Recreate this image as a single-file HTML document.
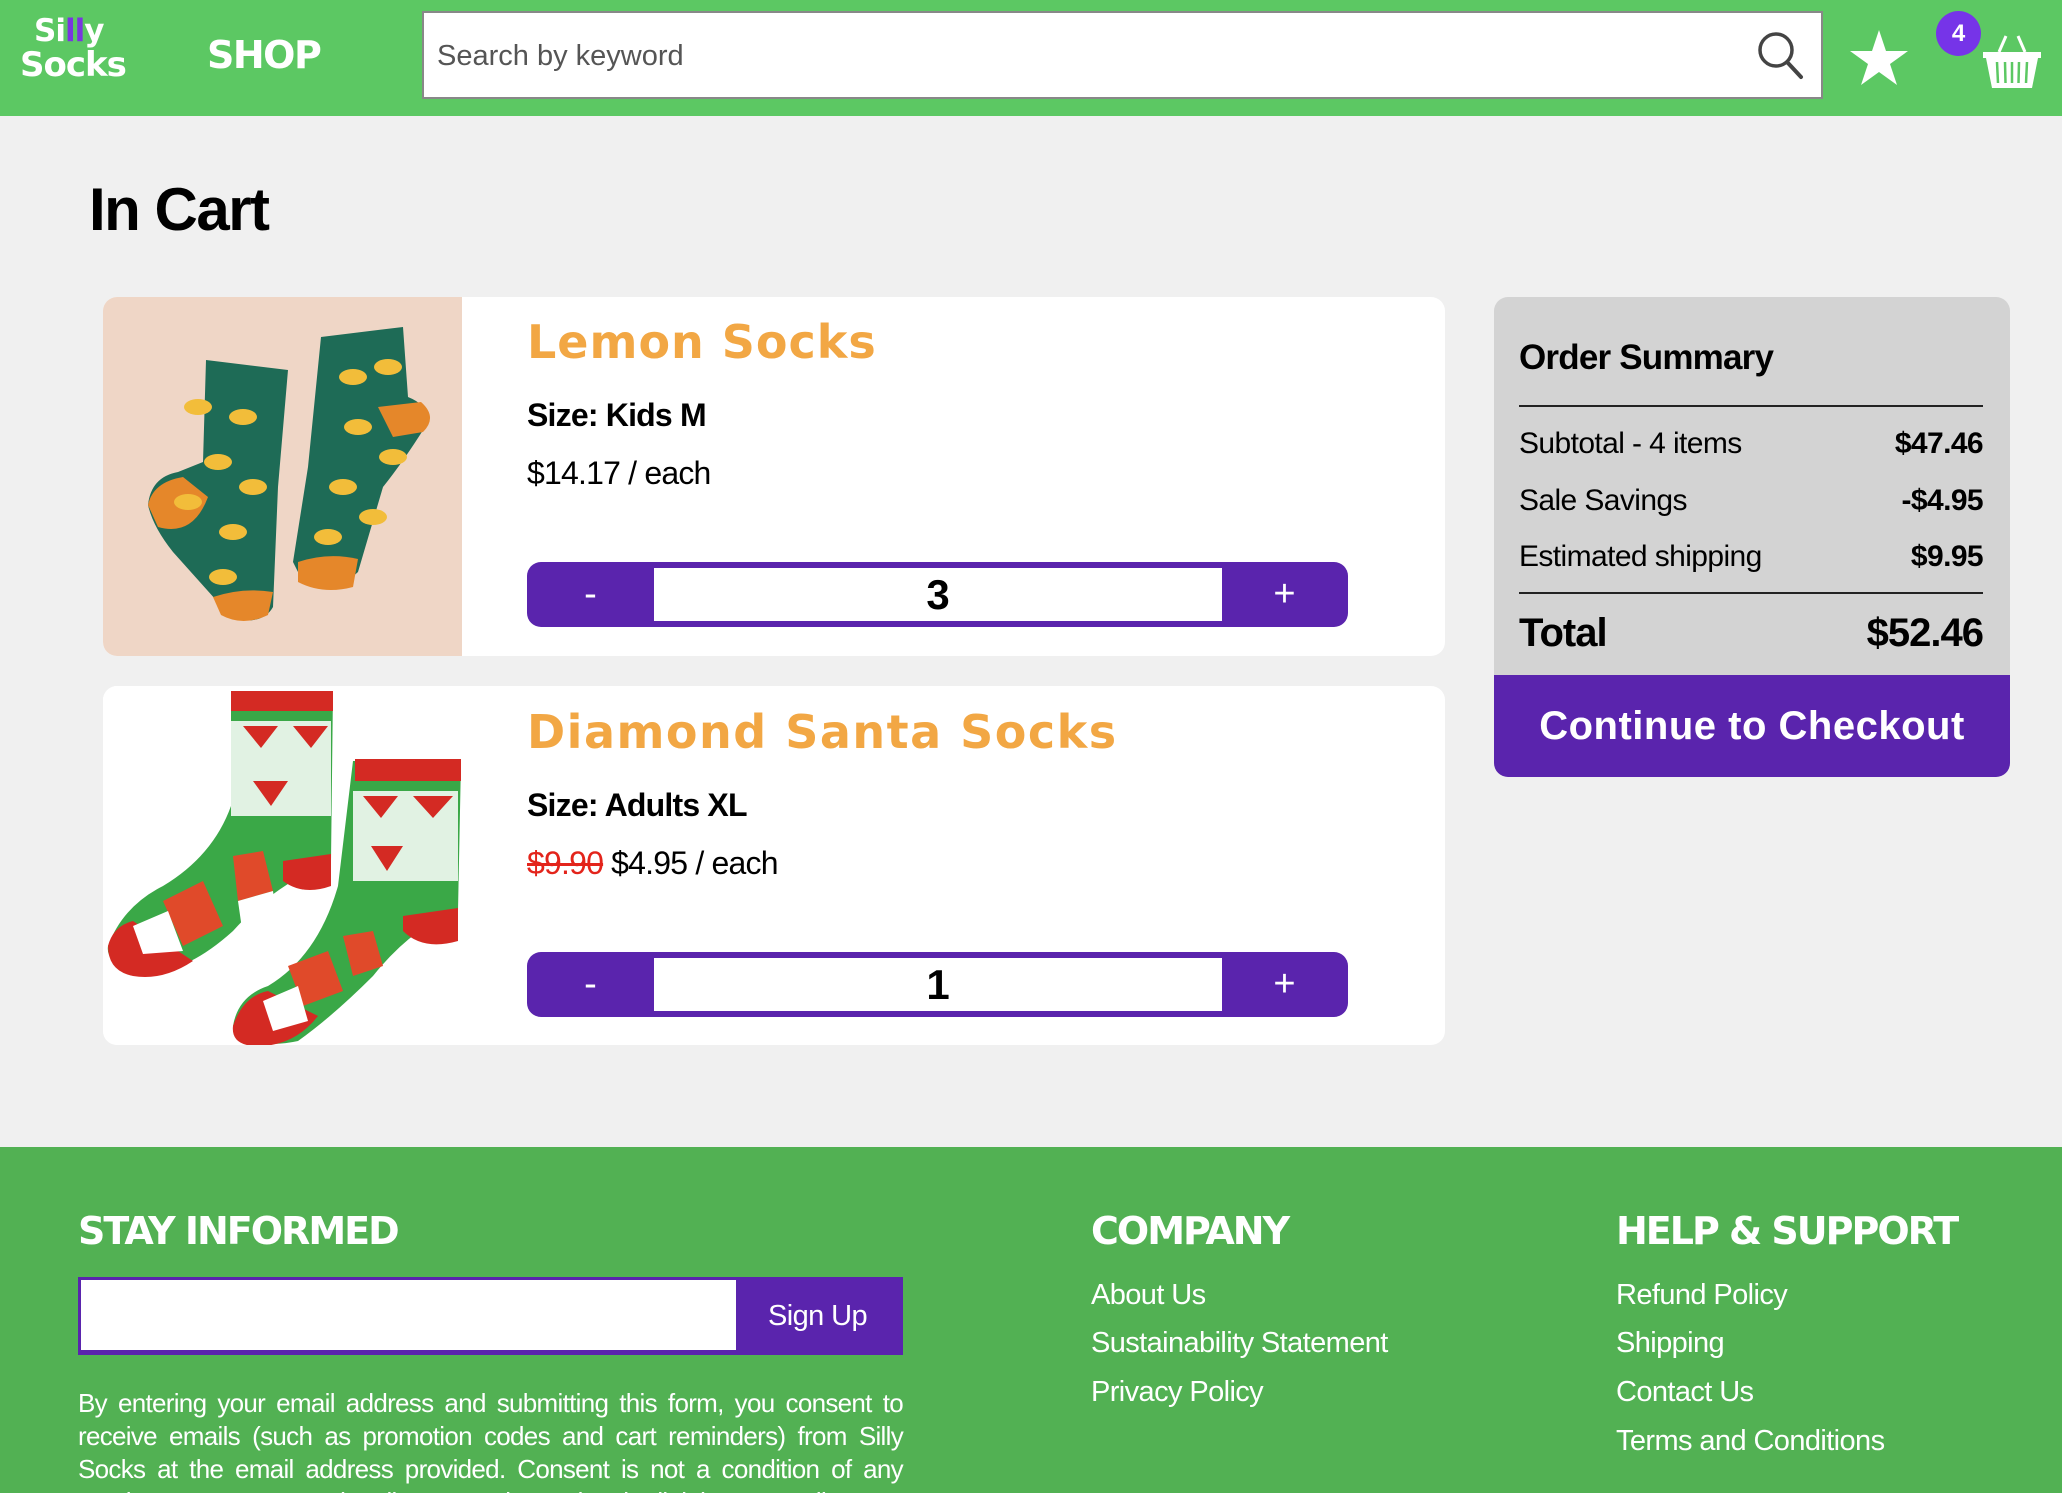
<!DOCTYPE html>
<html style="overflow:hidden;height:1493px"><head><meta charset="utf-8"><style>
*{margin:0;padding:0;box-sizing:border-box}
body{width:2062px;height:1493px;overflow:hidden;background:#f0f0f0;font-family:"Liberation Sans",sans-serif;position:relative;color:#000}
.a{position:absolute;line-height:1;white-space:nowrap}
.disp{font-family:"DejaVu Sans","Liberation Sans",sans-serif;font-weight:bold}
.card{position:absolute;left:103px;width:1342px;background:#fff;border-radius:14px;overflow:hidden}
.step{position:absolute;left:527px;width:821px;height:65px;background:#5a24ad;border-radius:14px}
.step .in{position:absolute;left:127px;top:6px;width:568px;height:53px;background:#fff;text-align:center;font:bold 42px/53px "Liberation Sans",sans-serif}
.step .m,.step .p{position:absolute;top:0;width:127px;height:65px;color:#fff;text-align:center;font:38px/65px "Liberation Sans",sans-serif}
.step .p{right:0}
.foot{position:absolute;left:0;top:1147px;width:2062px;height:346px;background:#52b153;color:#fff;overflow:hidden}
.fl{position:absolute;font-size:29px;line-height:1;color:#fff;letter-spacing:-0.6px}
.fh{position:absolute;font-family:"DejaVu Sans",sans-serif;font-weight:bold;font-size:38px;line-height:1;letter-spacing:-2px;color:#fff}
</style></head><body>
<!-- header -->
<div style="position:absolute;left:0;top:0;width:2062px;height:116px;background:#5cc863"></div>
<div class="a disp" style="left:34px;top:16px;font-size:31px;color:#fff;letter-spacing:-1px">Si<span style="color:#7a35e0">ll</span>y</div>
<div class="a disp" style="left:20px;top:48px;font-size:34px;color:#fff;letter-spacing:-1px">Socks</div>
<div class="a disp" style="left:207px;top:36px;font-size:38px;color:#fff;letter-spacing:-1.5px">SHOP</div>
<div style="position:absolute;left:422px;top:11px;width:1401px;height:88px;background:#fff;border:2px solid #888"></div>
<div class="a" style="left:437px;top:42px;font-size:29px;color:#555">Search by keyword</div>
<svg style="position:absolute;left:1756px;top:30px" width="50" height="52" viewBox="0 0 50 52"><circle cx="20" cy="20" r="16" fill="none" stroke="#444" stroke-width="3.5"/><line x1="32" y1="33" x2="45" y2="47" stroke="#444" stroke-width="4" stroke-linecap="round"/></svg>
<svg style="position:absolute;left:1850px;top:29px" width="58" height="56" viewBox="0 0 58 56"><polygon points="29,1 36,22 58,22 40,35 47,56 29,43 11,56 18,35 0,22 22,22" fill="#fff"/></svg>
<div style="position:absolute;left:1936px;top:11px;width:45px;height:45px;border-radius:50%;background:#7634e8;color:#fff;font:bold 24px/45px 'Liberation Sans',sans-serif;text-align:center">4</div>
<svg style="position:absolute;left:1983px;top:34px" width="58" height="54" viewBox="0 0 58 54"><path d="M16 18 L23 2 M42 18 L35 2" stroke="#fff" stroke-width="3" fill="none"/><rect x="0" y="18" width="58" height="6" fill="#fff"/><path d="M3 24 L55 24 L49 54 L9 54 Z" fill="#fff"/><g stroke="#5cc863" stroke-width="2.5"><line x1="14" y1="28" x2="15" y2="49"/><line x1="22" y1="28" x2="22.5" y2="49"/><line x1="29" y1="28" x2="29" y2="49"/><line x1="36" y1="28" x2="35.5" y2="49"/><line x1="44" y1="28" x2="43" y2="49"/></g></svg>
<div class="a" style="left:89px;top:180px;font-size:60px;font-weight:bold;letter-spacing:-1.5px">In Cart</div>

<!-- card 1 -->
<div class="card" style="top:297px;height:359px">
<svg style="position:absolute;left:0;top:0" width="359" height="359" viewBox="0 0 359 359">
<rect width="359" height="359" fill="#efd6c6"/>
<path d="M103 63 L185 73 L175 190 L170 310 Q160 328 130 322 L70 255 Q50 230 45 208 Q48 180 75 175 L100 165 Z" fill="#1e6b56"/>
<path d="M45 208 Q50 185 80 180 L105 200 Q90 240 55 230 Z" fill="#e5872a"/>
<path d="M110 300 Q140 290 170 295 L165 318 Q140 330 118 318 Z" fill="#e5872a"/>
<path d="M218 40 L300 30 L305 100 Q330 110 322 130 Q300 165 280 190 L255 275 Q240 290 200 285 L190 265 L205 170 Z" fill="#1e6b56"/>
<path d="M275 110 L318 105 Q335 120 320 135 L290 140 Z" fill="#e5872a"/>
<path d="M195 265 Q225 255 255 262 L250 290 Q220 298 195 285 Z" fill="#e5872a"/>
<g fill="#f2bd3a"><ellipse cx="95" cy="110" rx="14" ry="8"/><ellipse cx="140" cy="120" rx="14" ry="8"/><ellipse cx="115" cy="165" rx="14" ry="8"/><ellipse cx="150" cy="190" rx="14" ry="8"/><ellipse cx="85" cy="205" rx="14" ry="8"/><ellipse cx="130" cy="235" rx="14" ry="8"/><ellipse cx="120" cy="280" rx="14" ry="8"/><ellipse cx="250" cy="80" rx="14" ry="8"/><ellipse cx="285" cy="70" rx="14" ry="8"/><ellipse cx="255" cy="130" rx="14" ry="8"/><ellipse cx="290" cy="160" rx="14" ry="8"/><ellipse cx="240" cy="190" rx="14" ry="8"/><ellipse cx="270" cy="220" rx="14" ry="8"/><ellipse cx="225" cy="240" rx="14" ry="8"/></g>
</svg>
<div class="a disp" style="left:424px;top:22px;font-size:46px;color:#f2a744;letter-spacing:1px">Lemon Socks</div>
<div class="a" style="left:424px;top:102px;font-size:32px;font-weight:bold;letter-spacing:-0.8px">Size: Kids M</div>
<div class="a" style="left:424px;top:160px;font-size:32px;letter-spacing:-0.8px">$14.17 / each</div>
</div>
<div class="step" style="top:562px"><div class="m">-</div><div class="in">3</div><div class="p">+</div></div>

<!-- card 2 -->
<div class="card" style="top:686px;height:359px">
<svg style="position:absolute;left:0;top:0" width="359" height="359" viewBox="0 0 359 359">
<rect width="359" height="359" fill="#fff"/>
<path d="M128 5 L230 5 L228 175 Q170 200 130 245 Q80 290 40 285 Q2 280 5 260 Q20 220 60 200 Q110 170 128 120 Z" fill="#3aa847"/>
<rect x="128" y="5" width="102" height="20" fill="#d42a23"/>
<path d="M5 260 Q10 240 30 235 L90 275 Q60 295 30 290 Q5 285 5 260 Z" fill="#d42a23"/>
<path d="M180 175 L228 168 L228 200 Q200 210 180 195 Z" fill="#d42a23"/>
<path d="M60 215 L100 195 L120 240 L80 260 Z M130 170 L160 165 L170 205 L135 215 Z" fill="#e04a2a"/>
<path d="M30 240 L65 225 L80 265 L40 268 Z M135 215 L170 205 L175 245 L140 250 Z" fill="#fff"/>
<path d="M128 35 L228 35 L228 130 L128 130 Z" fill="#fff" opacity=".85"/>
<path d="M140 40 L175 40 L158 62 Z M190 40 L225 40 L208 62 Z M150 95 L185 95 L168 120 Z" fill="#d42a23"/>
<path d="M250 75 L358 75 L355 225 Q310 240 270 290 Q230 330 195 355 Q150 365 130 340 Q135 310 165 300 Q215 270 235 200 Z" fill="#3aa847"/>
<rect x="252" y="73" width="106" height="22" fill="#d42a23"/>
<path d="M130 340 Q140 310 165 305 L215 330 Q190 362 150 360 Q128 358 130 340 Z" fill="#d42a23"/>
<path d="M300 230 L355 222 L355 255 Q320 265 300 245 Z" fill="#d42a23"/>
<path d="M250 105 L355 105 L355 195 L250 195 Z" fill="#fff" opacity=".85"/>
<path d="M260 110 L295 110 L278 132 Z M310 110 L350 110 L330 132 Z M268 160 L300 160 L284 185 Z" fill="#d42a23"/>
<path d="M185 280 L225 265 L240 305 L200 320 Z M240 250 L270 245 L280 280 L250 290 Z" fill="#e04a2a"/>
<path d="M160 315 L195 300 L205 335 L170 345 Z" fill="#fff"/>
</svg>
<div class="a disp" style="left:424px;top:23px;font-size:46px;color:#f2a744;letter-spacing:1.5px">Diamond Santa Socks</div>
<div class="a" style="left:424px;top:103px;font-size:32px;font-weight:bold;letter-spacing:-0.8px">Size: Adults XL</div>
<div class="a" style="left:424px;top:161px;font-size:32px;letter-spacing:-0.8px"><span style="color:#e3241b;text-decoration:line-through">$9.90</span> $4.95 / each</div>
</div>
<div class="step" style="top:952px"><div class="m">-</div><div class="in">1</div><div class="p">+</div></div>

<!-- summary -->
<div style="position:absolute;left:1494px;top:297px;width:516px;height:480px;background:#d3d3d3;border-radius:14px;overflow:hidden">
<div class="a" style="left:25px;top:43px;font-size:35px;font-weight:bold;letter-spacing:-0.8px">Order Summary</div>
<div style="position:absolute;left:25px;top:108px;width:464px;height:2px;background:#222"></div>
<div class="a" style="left:25px;top:132px;font-size:30px;letter-spacing:-0.6px">Subtotal - 4 items</div>
<div class="a" style="right:27px;top:132px;font-size:30px;font-weight:bold;letter-spacing:-0.6px">$47.46</div>
<div class="a" style="left:25px;top:189px;font-size:30px;letter-spacing:-0.6px">Sale Savings</div>
<div class="a" style="right:27px;top:189px;font-size:30px;font-weight:bold;letter-spacing:-0.6px">-$4.95</div>
<div class="a" style="left:25px;top:245px;font-size:30px;letter-spacing:-0.6px">Estimated shipping</div>
<div class="a" style="right:27px;top:245px;font-size:30px;font-weight:bold;letter-spacing:-0.6px">$9.95</div>
<div style="position:absolute;left:25px;top:295px;width:464px;height:2px;background:#222"></div>
<div class="a" style="left:25px;top:316px;font-size:40px;font-weight:bold;letter-spacing:-1px">Total</div>
<div class="a" style="right:27px;top:316px;font-size:40px;font-weight:bold;letter-spacing:-1px">$52.46</div>
<div style="position:absolute;left:0;top:378px;width:516px;height:102px;background:#5a24ad;color:#fff;text-align:center;font:bold 40px/102px 'Liberation Sans',sans-serif;letter-spacing:0.5px">Continue to Checkout</div>
</div>

<!-- footer -->
<div class="foot">
<div class="fh" style="left:78px;top:65px">STAY INFORMED</div>
<div style="position:absolute;left:78px;top:130px;width:825px;height:78px;background:#5a24ad"></div>
<div style="position:absolute;left:81px;top:133px;width:655px;height:70px;background:#fff"></div>
<div class="fl" style="left:768px;top:155px">Sign Up</div>
<div style="position:absolute;left:78px;top:240px;width:825px;font-size:26px;line-height:33px;text-align:justify;letter-spacing:-0.7px;color:#fff">By entering your email address and submitting this form, you consent to receive emails (such as promotion codes and cart reminders) from Silly Socks at the email address provided. Consent is not a condition of any purchase. You can unsubscribe at any time using the link in our emails.</div>
<div class="fh" style="left:1091px;top:65px">COMPANY</div>
<div class="fl" style="left:1091px;top:134px">About Us</div>
<div class="fl" style="left:1091px;top:182px">Sustainability Statement</div>
<div class="fl" style="left:1091px;top:231px">Privacy Policy</div>
<div class="fh" style="left:1616px;top:65px">HELP &amp; SUPPORT</div>
<div class="fl" style="left:1616px;top:134px">Refund Policy</div>
<div class="fl" style="left:1616px;top:182px">Shipping</div>
<div class="fl" style="left:1616px;top:231px">Contact Us</div>
<div class="fl" style="left:1616px;top:280px">Terms and Conditions</div>
</div>
</body></html>
